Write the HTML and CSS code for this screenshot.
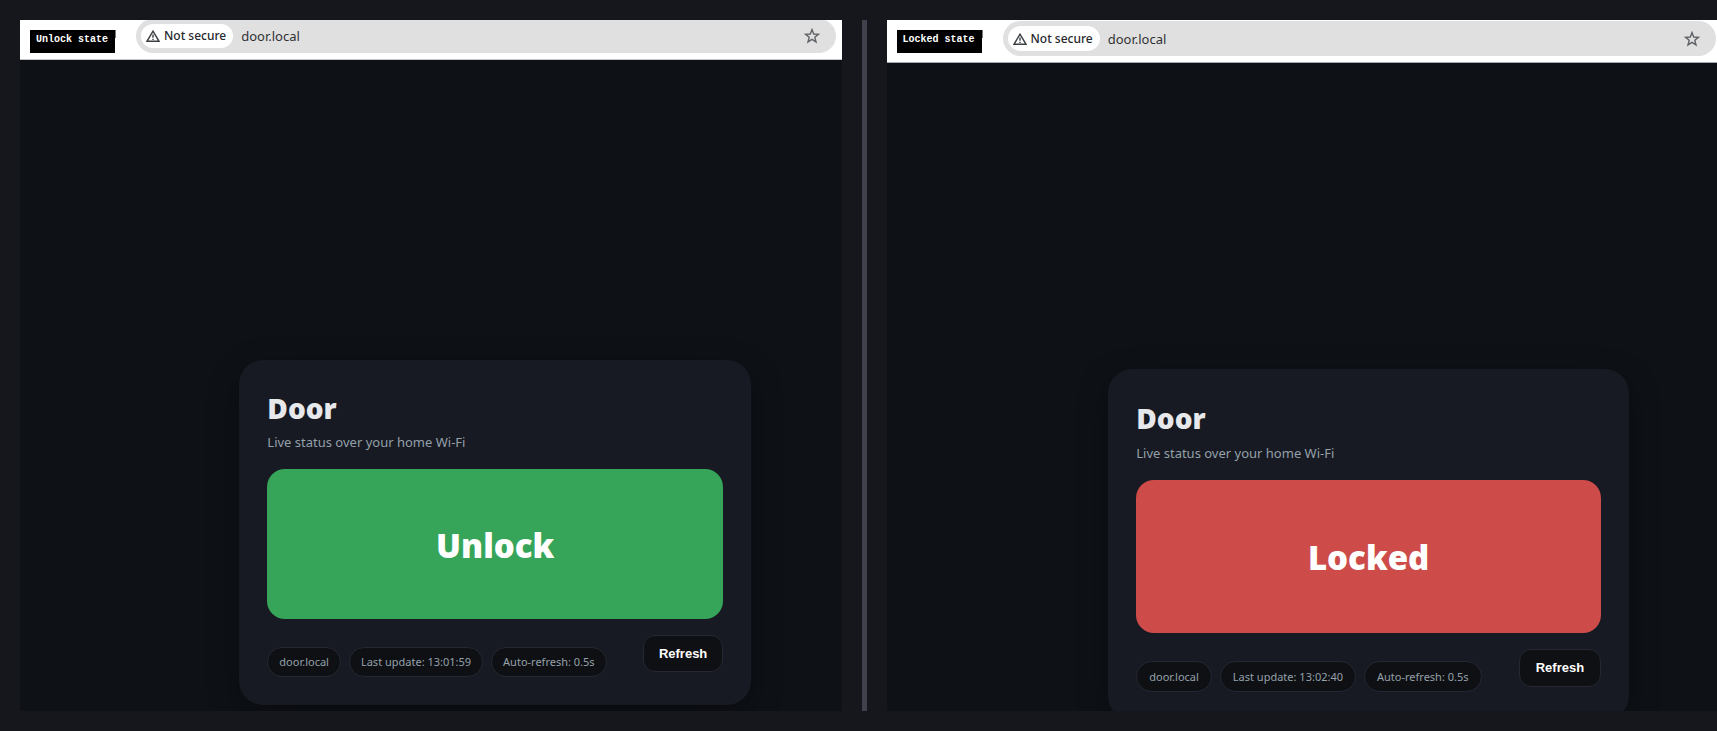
FILE: index.html
```html
<!DOCTYPE html>
<html lang="en">
<head>
<meta charset="utf-8">
<title>Door status</title>
<link rel="stylesheet" href="styles.css">
</head>
<body>
<main class="compare">
  <section class="pane pane-unlock">
    <header class="toolbar">
      <span class="label">Unlock state</span>
      <div class="omnibox">
        <button class="chip" type="button">
          <svg class="warn" viewBox="0 0 14 12" aria-hidden="true"><path d="M7 1.2 13 11.3H1Z"/><path d="M7 4.6v3.2M7 8.8v1.2"/></svg>
          Not secure
        </button>
        <input class="url" type="text" value="door.local" aria-label="Address">
        <button class="bookmark" type="button" aria-label="Bookmark"><svg class="star" viewBox="0 0 16 16" aria-hidden="true"><path d="M8 1.6 9.7 6l4.7.3-3.6 3 1.2 4.6L8 11.4l-4 2.5 1.2-4.6-3.6-3L6.300 6Z"/></svg></button>
      </div>
    </header>
    <article class="card">
      <h1 class="title">Door</h1>
      <p class="subtitle">Live status over your home Wi-Fi</p>
      <div class="status">Unlock</div>
      <footer class="meta">
        <ul class="pills">
          <li class="pill">door.local</li>
          <li class="pill">Last update: 13:01:59</li>
          <li class="pill">Auto-refresh: 0.5s</li>
        </ul>
        <button class="refresh" type="button">Refresh</button>
      </footer>
    </article>
  </section>
  <div class="divider"></div>
  <section class="pane pane-locked">
    <header class="toolbar">
      <span class="label">Locked state</span>
      <div class="omnibox">
        <button class="chip" type="button">
          <svg class="warn" viewBox="0 0 14 12" aria-hidden="true"><path d="M7 1.2 13 11.3H1Z"/><path d="M7 4.6v3.2M7 8.8v1.2"/></svg>
          Not secure
        </button>
        <input class="url" type="text" value="door.local" aria-label="Address">
        <button class="bookmark" type="button" aria-label="Bookmark"><svg class="star" viewBox="0 0 16 16" aria-hidden="true"><path d="M8 1.6 9.7 6l4.7.3-3.6 3 1.2 4.6L8 11.4l-4 2.5 1.2-4.6-3.6-3L6.300 6Z"/></svg></button>
      </div>
    </header>
    <article class="card">
      <h1 class="title">Door</h1>
      <p class="subtitle">Live status over your home Wi-Fi</p>
      <div class="status">Locked</div>
      <footer class="meta">
        <ul class="pills">
          <li class="pill">door.local</li>
          <li class="pill">Last update: 13:02:40</li>
          <li class="pill">Auto-refresh: 0.5s</li>
        </ul>
        <button class="refresh" type="button">Refresh</button>
      </footer>
    </article>
  </section>
</main>
</body>
</html>
```
FILE: styles.css
```css
* { box-sizing: border-box; }
body {
  margin: 0;
  background: #16171c;
  color: #e6e8ec;
  font-family: "Noto Sans", "Open Sans", sans-serif;
}
.compare {
  display: grid;
  grid-template-columns: 822fr 5px 831fr;
  column-gap: 20px;
  height: 100vh;
  padding: 20px 0 20px 20px;
}
.divider { background: #3f424c; }
.pane {
  display: flex;
  flex-direction: column;
  overflow: hidden;
  background: #0e1116;
}
.toolbar {
  display: flex;
  flex: none;
  gap: 21px;
  height: 40px;
  padding-left: 10px;
  background: #fff;
  border-bottom: 1px solid #c4c6c8;
}
.label {
  position: relative;
  width: 85px;
  height: 23px;
  margin-top: 10px;
  padding-left: 6px;
  background: #000;
  color: #fff;
  font: bold 10px/20px "Liberation Mono", monospace;
  white-space: nowrap;
}
.label::after {
  content: "";
  position: absolute;
  left: 85px;
  top: 0;
  width: 1px;
  height: 8px;
  background: #777;
}
.omnibox {
  display: flex;
  flex: 1;
  align-items: center;
  height: 34px;
  margin: -1px 6px 0 0;
  padding: 0 16px 0 5px;
  background: #e0e0e0;
  border-radius: 17px;
}
.chip {
  display: flex;
  align-items: center;
  gap: 4px;
  height: 24px;
  padding: 0 7px 0 5px;
  border: 0;
  border-radius: 12px;
  background: #fff;
  color: #26282c;
  font: 500 12px/24px "Noto Sans", sans-serif;
  white-space: nowrap;
}
.warn { width: 14px; height: 12px; fill: none; stroke: #3c4043; stroke-width: 1.4; }
.url {
  flex: 1;
  min-width: 0;
  padding: 0 8px;
  border: 0;
  background: none;
  color: #303236;
  font: 13px/20px "Noto Sans", sans-serif;
}
.bookmark { padding: 0; border: 0; background: none; line-height: 0; }
.star { width: 16px; height: 16px; fill: none; stroke: #5f6368; stroke-width: 1.4; }
.card {
  display: flex;
  flex: none;
  flex-direction: column;
  width: 62.3%;
  margin: 300px 0 0 26.7%;
  padding: 28px;
  border-radius: 24px;
  background: #171a22;
  box-shadow: 0 10px 30px rgba(0, 0, 0, 0.35);
}
.title { margin: 0; font-family: "Open Sans", sans-serif; font-size: 28px; font-weight: 800; line-height: 40px; }
.subtitle { margin: 4px 0 16px; color: #94a0aa; font-size: 13px; line-height: 21px; }
.status {
  display: flex;
  align-items: center;
  justify-content: center;
  height: 150px;
  padding-top: 2px;
  border-radius: 18px;
  background: #36a55a;
  color: #fff;
  font-family: "Open Sans", sans-serif;
  font-size: 33px;
  font-weight: 800;
}
.meta {
  display: flex;
  justify-content: space-between;
  align-items: flex-start;
  margin-top: 16px;
}
.pills { display: flex; gap: 8px; margin: 12px 0 0; padding: 0; list-style: none; }
.pill {
  height: 30px;
  padding: 0 11px;
  border: 1px solid #232833;
  border-radius: 15px;
  background: #0f1014;
  color: #94a0aa;
  font-size: 11px;
  line-height: 28px;
  white-space: nowrap;
}
.refresh {
  width: 80px;
  height: 37px;
  padding: 0;
  border: 1px solid #232833;
  border-radius: 12px;
  background: #0f1014;
  color: #fff;
  font: bold 13px/20px "Liberation Sans", sans-serif;
}
.pane-locked .toolbar { height: 43px; border-bottom-color: #a4a8ac; }
.pane-locked .omnibox { height: 35px; margin: 1px 1px 0 0; border-radius: 18px; }
.pane-locked .chip { height: 25px; border-radius: 13px; }
.pane-locked .card { margin-top: 306px; width: 62.7%; }
.pane-locked .title { line-height: 42px; }
.pane-locked .status { height: 153px; background: #cd4c4a; }
.pane-locked .pill { height: 31px; padding: 0 12px; line-height: 29px; border-radius: 16px; }
.pane-locked .refresh { width: 82px; height: 38px; }
```
